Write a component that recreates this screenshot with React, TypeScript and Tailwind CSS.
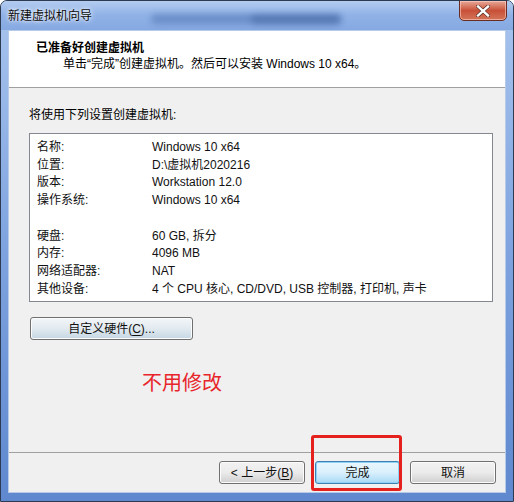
import React from "react";

const font = "font-['Liberation_Sans','Noto_Sans_CJK_SC',sans-serif]";

type Row = { label: string; value: string } | null;

const rows: Row[] = [
  { label: "名称:", value: "Windows 10 x64" },
  { label: "位置:", value: "D:\\虚拟机2020216" },
  { label: "版本:", value: "Workstation 12.0" },
  { label: "操作系统:", value: "Windows 10 x64" },
  null,
  { label: "硬盘:", value: "60 GB, 拆分" },
  { label: "内存:", value: "4096 MB" },
  { label: "网络适配器:", value: "NAT" },
  { label: "其他设备:", value: "4 个 CPU 核心, CD/DVD, USB 控制器, 打印机, 声卡" },
];

function WinButton({
  children,
  primary,
  className = "",
}: {
  children: React.ReactNode;
  primary?: boolean;
  className?: string;
}) {
  return (
    <div
      className={
        "flex items-center justify-center rounded-[3px] border text-[12px] leading-none text-[#111] " +
        (primary
          ? "border-[#3c7fb1] bg-gradient-to-b from-[#eaf6fd] via-[#d9f0fc] to-[#a7d9f5] shadow-[inset_0_0_0_1px_#8ed3f7] "
          : "border-[#707070] bg-gradient-to-b from-[#f2f2f2] via-[#ebebeb] to-[#cfcfcf] shadow-[inset_0_0_0_1px_#fcfcfc] ") +
        className
      }
    >
      {children}
    </div>
  );
}

export default function App() {
  return (
    <div className={"relative h-[502px] w-[514px] overflow-hidden bg-white " + font}>
      {/* window frame */}
      <div className="relative flex h-[502px] w-[514px] flex-col rounded-t-[7px] border border-[#2c3b52] bg-gradient-to-b from-[#a9c5ee] via-[#7ea3df] to-[#5f88cf]">
        {/* title bar */}
        <div className="relative flex h-[29px] shrink-0 items-center overflow-hidden rounded-t-[6px] bg-gradient-to-b from-[#b3ccf0] via-[#8fb1e6] to-[#86a9e2] pl-[7px]">
          <div className="absolute left-[150px] top-[13px] h-[10px] w-[190px] rounded-full bg-[#3d5f9f] opacity-40 blur-[3px]" />
          <div className="absolute left-[250px] top-[14px] h-[9px] w-[90px] rounded-full bg-[#2f4f8c] opacity-35 blur-[3px]" />
          <span className="relative text-[12px] text-[#0b0b0b] [text-shadow:0_0_6px_#ffffff,0_0_3px_#ffffff]">
            新建虚拟机向导
          </span>
          {/* close button */}
          <div className="absolute right-[6px] top-[-1px] flex h-[21px] w-[48px] items-center justify-center rounded-b-[5px] border border-[#6b2a22] bg-gradient-to-b from-[#e6a898] via-[#c85038] to-[#d27458] shadow-[inset_0_0_0_1px_rgba(255,210,200,0.6)]">
            <svg width="14" height="12" viewBox="0 0 14 12">
              <path
                d="M2 1.5 L12 10.5 M12 1.5 L2 10.5"
                stroke="#3a1a16"
                strokeWidth="3.6"
                strokeLinecap="square"
              />
              <path
                d="M2 1.5 L12 10.5 M12 1.5 L2 10.5"
                stroke="#ffffff"
                strokeWidth="2.4"
                strokeLinecap="square"
              />
            </svg>
          </div>
        </div>

        {/* client area */}
        <div className="mx-[7px] mb-[8px] flex flex-1 flex-col border border-[#b7cbe8] bg-[#f0f0f0]">
          {/* wizard header */}
          <div className="h-[57px] shrink-0 border-b border-[#a0a0a0] bg-white pt-[9px]">
            <div className="pl-[27px] text-[12px] font-bold leading-[16px] text-black">已准备好创建虚拟机</div>
            <div className="pl-[54px] text-[12px] leading-[16px] text-black">
              单击“完成”创建虚拟机。然后可以安装 Windows 10 x64。
            </div>
          </div>

          {/* wizard body */}
          <div className="flex flex-1 flex-col pl-[20px] pr-[12px] pt-[19px]">
            <div className="text-[12px] leading-[16px] text-black">将使用下列设置创建虚拟机:</div>
            <div className="mt-[10px] h-[169px] w-[464px] border border-[#828790] bg-white pt-[4px]">
              {rows.map((r, i) =>
                r ? (
                  <div key={i} className="flex h-[17.75px] items-center text-[12px] text-[#111]">
                    <span className="w-[122px] shrink-0 pl-[7px]">{r.label}</span>
                    <span>{r.value}</span>
                  </div>
                ) : (
                  <div key={i} className="h-[17.75px]" />
                )
              )}
            </div>
            <div className="mt-[15px] pl-[1px]">
              <div className="flex h-[23px] w-[163px] items-center justify-center rounded-[3px] border border-[#707070] bg-gradient-to-b from-[#f3f6f9] via-[#e2eaf0] to-[#c5d7e3] text-[12px] text-[#111] shadow-[inset_0_0_0_1px_#fafcfd]">
                自定义硬件(<span className="underline underline-offset-2">C</span>)...
              </div>
            </div>
            <div className="mt-[31px] pl-[113px] text-[20px] leading-[24px] text-[#e8252a]">不用修改</div>
          </div>

          {/* footer */}
          <div className="h-[40px] shrink-0 border-t border-[#a0a0a0]">
            <div className="flex justify-end gap-[10px] pr-[9px] pt-[8px]">
              <WinButton className="h-[23px] w-[86px]">
                &lt; 上一步(<span className="underline underline-offset-2">B</span>)
              </WinButton>
              <WinButton primary className="h-[23px] w-[85px]">
                完成
              </WinButton>
              <WinButton className="h-[23px] w-[86px]">取消</WinButton>
            </div>
          </div>
        </div>
      </div>

      {/* red highlight box */}
      <div className="absolute left-[311px] top-[435px] h-[56px] w-[91px] rounded-[3px] border-[3px] border-[#e5211d]" />
    </div>
  );
}
